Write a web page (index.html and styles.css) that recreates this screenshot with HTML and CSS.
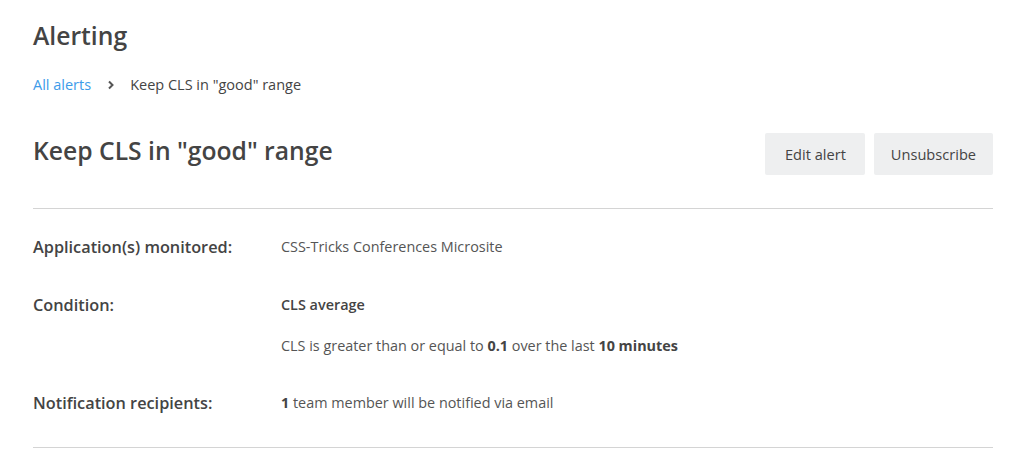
FILE: index.html
```html
<!DOCTYPE html>
<html lang="en">
<head>
    <meta charset="UTF-8">
    <title>Alerting</title>
    <link rel="stylesheet" href="styles.css">
</head>
<body>
    <div class="page">
        <h1 class="page-title">Alerting</h1>
        <nav class="breadcrumb">
            <a href="#">All alerts</a>
            <svg class="chevron" width="8" height="10" viewBox="0 0 8 10"><path d="M2 1.5 L5.5 5 L2 8.5" fill="none" stroke="#555" stroke-width="2"/></svg>
            <span>Keep CLS in "good" range</span>
        </nav>

        <div class="alert-header">
            <h2>Keep CLS in "good" range</h2>
            <div class="actions">
                <button class="edit-button">Edit alert</button>
                <button>Unsubscribe</button>
            </div>
        </div>

        <div class="details">
            <div class="row">
                <div class="label">Application(s) monitored:</div>
                <div class="value"><p>CSS-Tricks Conferences Microsite</p></div>
            </div>
            <div class="row">
                <div class="label">Condition:</div>
                <div class="value">
                    <p class="strong">CLS average</p>
                    <p>CLS is greater than or equal to <b>0.1</b> over the last <b>10 minutes</b></p>
                </div>
            </div>
            <div class="row">
                <div class="label">Notification recipients:</div>
                <div class="value"><p><b>1</b> team member will be notified via email</p></div>
            </div>
        </div>
    </div>
</body>
</html>
```

FILE: styles.css
```css
body {
    margin: 0;
    font-family: "Open Sans", Arial, sans-serif;
    color: #444;
    background-color: #fff;
}
.page {
    width: 960px;
    margin-left: 33px;
    padding-top: 18px;
}
.page-title {
    font-size: 24.7px;
    font-weight: 600;
    line-height: 36px;
    margin: 0 0 21px 0;
}
.breadcrumb {
    display: flex;
    align-items: center;
    font-size: 14.5px;
    line-height: 20px;
    color: #444;
}
.breadcrumb a {
    color: #3d9be9;
    text-decoration: none;
}
.chevron {
    margin: 0 15px 0 16px;
}
.alert-header {
    display: flex;
    justify-content: space-between;
    align-items: center;
    margin-top: 38px;
    padding-bottom: 33px;
    border-bottom: 1px solid #d4d4d4;
}
.alert-header h2 {
    font-size: 24.7px;
    font-weight: 600;
    margin: 0;
    padding-bottom: 6px;
    line-height: 36px;
}
.actions {
    display: flex;
    gap: 9px;
}
.actions button {
    font-family: inherit;
    font-size: 14.6px;
    color: #444;
    background-color: #eeeff0;
    border: none;
    border-radius: 2px;
    height: 42px;
    padding: 0 17px;
    cursor: pointer;
}
.actions .edit-button {
    padding: 0 19px 0 20px;
}
.details {
    padding-top: 27px;
    padding-bottom: 33px;
    border-bottom: 1px solid #d4d4d4;
}
.row {
    display: flex;
    margin-bottom: 35.5px;
}
.row:last-child {
    margin-bottom: 0;
}
.label {
    width: 248px;
    font-size: 16.3px;
    font-weight: 600;
    line-height: 22px;
    color: #444;
}
.value {
    font-size: 14.4px;
    line-height: 22px;
    color: #555;
}
.value p {
    margin: 0 0 19px 0;
}
.value p:last-child {
    margin-bottom: 0;
}
.value .strong {
    font-weight: 600;
    color: #444;
}
.value b {
    font-weight: 700;
    color: #444;
}
```
